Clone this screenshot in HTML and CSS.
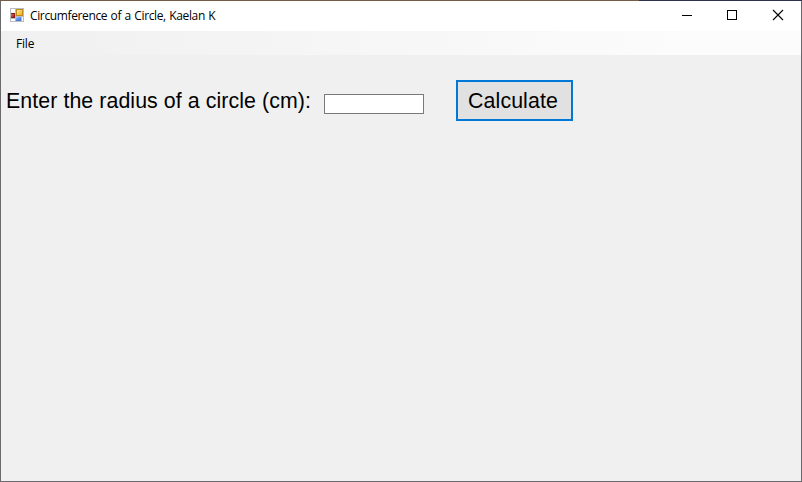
FILE: index.html
```html
<!DOCTYPE html>
<html lang="en">
<head>
<meta charset="utf-8">
<title>Circumference of a Circle, Kaelan K</title>
<link rel="stylesheet" href="styles.css">
</head>
<body>
<div class="window">
  <header class="titlebar">
    <svg class="app-icon" width="14" height="14" viewBox="0 0 14 14" shape-rendering="crispEdges">
      <defs>
        <linearGradient id="gold" x2="1" y2="1"><stop stop-color="#ffe9a0"/><stop offset="1" stop-color="#f0ae10"/></linearGradient>
        <linearGradient id="blue" x2="1" y2="1"><stop stop-color="#a0c4ff"/><stop offset="1" stop-color="#2f6ae0"/></linearGradient>
        <linearGradient id="red" x2="1" y2="1"><stop stop-color="#e07068"/><stop offset="1" stop-color="#a81810"/></linearGradient>
      </defs>
      <path fill="#b9bcc0" d="M0 0h14v14H0z"/>
      <path fill="#fff" d="M1 1h4v4H1zM1 11h4v2H1zM12 9h1v4h-1z"/>
      <path fill="#c08a18" d="M6 1h7v7H6z"/>
      <path fill="url(#gold)" d="M7 2h5v5H7z"/>
      <path fill="#8e1b1b" d="M1 5h4v5H1z"/>
      <path fill="url(#red)" d="M1 6h3v3H1z"/>
      <path fill="#4d7bd0" d="M6 9h5v4H6z"/>
      <path fill="url(#blue)" d="M6 9h5v3H6z"/>
    </svg>
    <span class="title">Circumference of a Circle, Kaelan K</span>
    <div class="controls">
      <svg width="45" height="30" shape-rendering="crispEdges"><path fill="#000" d="M16 14h10v1H16z"/></svg>
      <svg width="45" height="30" shape-rendering="crispEdges"><path fill="none" stroke="#000" d="M16.500 9.500h9v9h-9z"/></svg>
      <svg width="45" height="30"><path fill="none" stroke="#000" stroke-width="1.100" d="M17 9l10 10M27 9L17 19"/></svg>
    </div>
  </header>
  <nav class="menubar"><span class="menu-item">File</span></nav>
  <main class="form">
    <label class="label" for="radius"><span>Enter the radius of a circle (cm):</span></label>
    <input class="radius" id="radius" type="text">
    <button class="calculate" type="button">Calculate</button>
  </main>
</div>
</body>
</html>
```
FILE: styles.css
```css
* { box-sizing: border-box; }
body { margin: 0; color: #000; overflow: hidden; }
.window {
  width: 802px;
  height: 482px;
  display: flex;
  flex-direction: column;
  background: #f0f0f0;
  border: 1px solid #6b696b;
  position: relative;
}
.window::before {
  content: "";
  position: absolute;
  top: -1px;
  left: -1px;
  width: 802px;
  height: 1px;
  background: linear-gradient(90deg, #735d43 639px, #2e3353 639px);
}
.titlebar {
  height: 30px;
  flex: none;
  display: flex;
  align-items: center;
  background: #fff;
  padding-left: 9px;
}
.app-icon { flex: none; margin-bottom: 2px; }
.title {
  margin-left: 6px;
  font: 12px/30px "Open Sans", sans-serif;
  letter-spacing: -0.37px;
  word-spacing: 0.7px;
  white-space: nowrap;
}
.controls { display: flex; margin-left: auto; }
.controls svg { display: block; }
.menubar {
  height: 24px;
  flex: none;
  padding: 1px 0 0 15px;
  background: linear-gradient(90deg, #f0f0f0, #fcfcfc 88%);
  font: 12px/23px "Open Sans", sans-serif;
  letter-spacing: -0.2px;
}
.form {
  display: flex;
  align-items: flex-start;
  padding: 25px 0 0 5px;
  font-family: "Liberation Sans", Arial, sans-serif;
}
.label {
  width: 318px;
  padding-top: 1px;
  font-size: 21.33px;
  line-height: 41px;
  letter-spacing: 0.08px;
  white-space: nowrap;
}
.radius {
  width: 100px;
  height: 20px;
  margin: 14px 0 0;
  padding: 0 3px;
  border: 1px solid #7a7a7a;
  background: #fff;
  outline: 0;
}
.calculate {
  width: 117px;
  height: 41px;
  margin: 0 0 0 32px;
  padding: 2px 3px 0 0;
  border: 2px solid #0078d7;
  background: #e1e1e1;
  color: #000;
  font: 21.33px "Liberation Sans", Arial, sans-serif;
  letter-spacing: 0.1px;
}
```
